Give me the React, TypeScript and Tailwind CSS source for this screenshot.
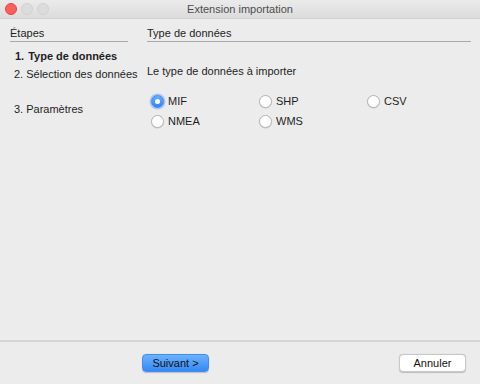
import { useState } from "react";

const options = ["MIF", "SHP", "CSV", "NMEA", "WMS"];

function Radio({ checked }: { checked: boolean }) {
  if (checked) {
    return (
      <span className="flex h-[13px] w-[13px] items-center justify-center rounded-full border border-[#3a86f0] bg-gradient-to-b from-[#6aaefc] to-[#2f84f4] shadow-[0_0_0_1.5px_rgba(90,150,240,0.45)]">
        <span className="h-[5px] w-[5px] rounded-full bg-white" />
      </span>
    );
  }
  return (
    <span className="h-[13px] w-[13px] rounded-full border border-[#b5b5b5] bg-white shadow-[0_0.5px_1px_rgba(0,0,0,0.15)]" />
  );
}

export default function App() {
  const [selected, setSelected] = useState("MIF");

  return (
    <div
      className="flex h-[384px] w-[480px] flex-col bg-[#ececec] text-[11px] text-[#1e1e1e]"
      style={{ fontFamily: '"Liberation Sans", Arial, sans-serif' }}
    >
      {/* title bar */}
      <div className="relative flex h-[19px] items-center justify-center border-b border-[#d2d2d2] bg-gradient-to-b from-[#ebebeb] to-[#dcdcdc]">
        <div className="absolute left-[5px] top-[3px] flex gap-[4px]">
          <span className="h-[12px] w-[12px] rounded-full border border-[#e0443e] bg-[#fc605c]" />
          <span className="h-[12px] w-[12px] rounded-full border border-[#d1d1d1] bg-[#dcdcdc]" />
          <span className="h-[12px] w-[12px] rounded-full border border-[#d1d1d1] bg-[#dcdcdc]" />
        </div>
        <span className="text-[11px] text-[#4d4d4d]">Extension importation</span>
      </div>

      <div className="flex flex-1 pt-[7px]">
        {/* steps */}
        <div className="ml-[10px] w-[118px] whitespace-nowrap">
          <div className="h-[16px] border-b border-[#a9a9a9] leading-[15px]">Étapes</div>
          <div className="ml-[5px] mt-[6px] flex gap-[4px] font-bold leading-[16px]">
            <span>1.</span>
            <span>Type de données</span>
          </div>
          <div className="ml-[4px] mt-[2px] flex gap-[3px] leading-[16px]">
            <span>2.</span>
            <span>Sélection des données</span>
          </div>
          <div className="ml-[4px] mt-[19px] flex gap-[3px] leading-[16px]">
            <span>3.</span>
            <span>Paramètres</span>
          </div>
        </div>

        {/* content */}
        <div className="ml-[19px] w-[324px]">
          <div className="h-[16px] border-b border-[#a9a9a9] leading-[15px]">Type de données</div>
          <div className="mt-[21px] leading-[16px]">Le type de données à importer</div>
          <div className="ml-[4px] mt-[15px] grid grid-cols-[108px_108px_108px] gap-y-[6px]">
            {options.map((o) => (
              <label
                key={o}
                className="flex h-[14px] cursor-pointer items-center gap-[4px]"
                onClick={() => setSelected(o)}
              >
                <Radio checked={selected === o} />
                <span>{o}</span>
              </label>
            ))}
          </div>
        </div>
      </div>

      {/* footer */}
      <div className="flex h-[44px] items-start border-t-2 border-[#d6d6d6] pt-[12px]">
        <button className="ml-[142px] h-[18px] w-[67px] rounded-[4px] border border-[#3f8ef0] bg-gradient-to-b from-[#6cb1fb] to-[#3389f6] text-[11px] leading-[16px] text-[#111] shadow-[0_0.5px_1px_rgba(0,0,0,0.2)]">
          Suivant &gt;
        </button>
        <button className="ml-[190px] h-[18px] w-[67px] rounded-[4px] border border-[#c8c8c8] bg-white text-[11px] leading-[16px] text-[#111] shadow-[0_0.5px_1px_rgba(0,0,0,0.2)]">
          Annuler
        </button>
      </div>
    </div>
  );
}
